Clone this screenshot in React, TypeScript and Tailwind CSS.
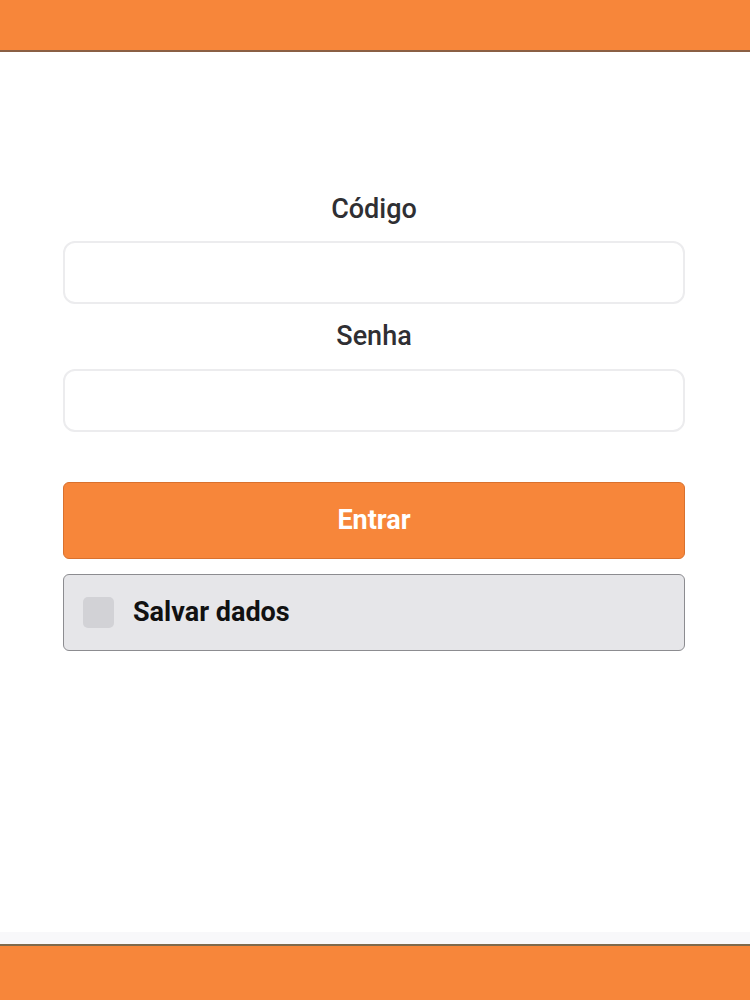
import React, { useState } from 'react';

// Tela de login simples
const App: React.FC = () => {
  const [codigo, setCodigo] = useState('');
  const [senha, setSenha] = useState('');
  const [salvar, setSalvar] = useState(false);

  return (
    <div
      className="flex flex-col h-[1000px] w-full bg-white"
      style={{ fontFamily: "Roboto, 'Liberation Sans', sans-serif" }}
    >
      {/* Header */}
      <header className="h-[52px] bg-[#f7863a] border-b-2 border-[#8a5f44]" />

      <main className="flex-1 flex flex-col pl-[63px] pr-[65px] pt-[140px]">
        <label className="text-center text-[27px] font-medium text-[#2f2f33] leading-[34px]">Código</label>
        <input
          value={codigo}
          onChange={(e) => setCodigo(e.target.value)}
          className="mt-[15px] h-[63px] w-full rounded-[12px] border-2 border-[#ececee] bg-white px-4 text-xl outline-none"
        />
        <label className="mt-[15px] text-center text-[27px] font-medium text-[#2f2f33] leading-[34px]">Senha</label>
        <input
          type="password"
          value={senha}
          onChange={(e) => setSenha(e.target.value)}
          className="mt-[16px] h-[63px] w-full rounded-[12px] border-2 border-[#ececee] bg-white px-4 text-xl outline-none"
        />

        <button className="mt-[50px] h-[77px] w-full rounded-[6px] border border-[#d9712e] bg-[#f7863a] text-[27px] font-bold text-white">
          Entrar
        </button>

        <button
          onClick={() => setSalvar(!salvar)}
          className="mt-[15px] h-[77px] w-full flex items-center gap-[19px] px-[19px] rounded-[6px] border border-[#8c8c90] bg-[#e6e6e9]"
        >
          <span
            className={`w-[31px] h-[31px] rounded-[5px] ${salvar ? 'bg-[#f7863a]' : 'bg-[#d2d2d6]'}`}
          />
          <span className="text-[27px] font-bold text-[#111]">Salvar dados</span>
        </button>
      </main>

      {/* Footer */}
      <div className="h-[12px] bg-[#f8f8fa]" />
      <footer className="h-[56px] bg-[#f7863a] border-t-2 border-[#7e6a4c]" />
    </div>
  );
};

export default App;
